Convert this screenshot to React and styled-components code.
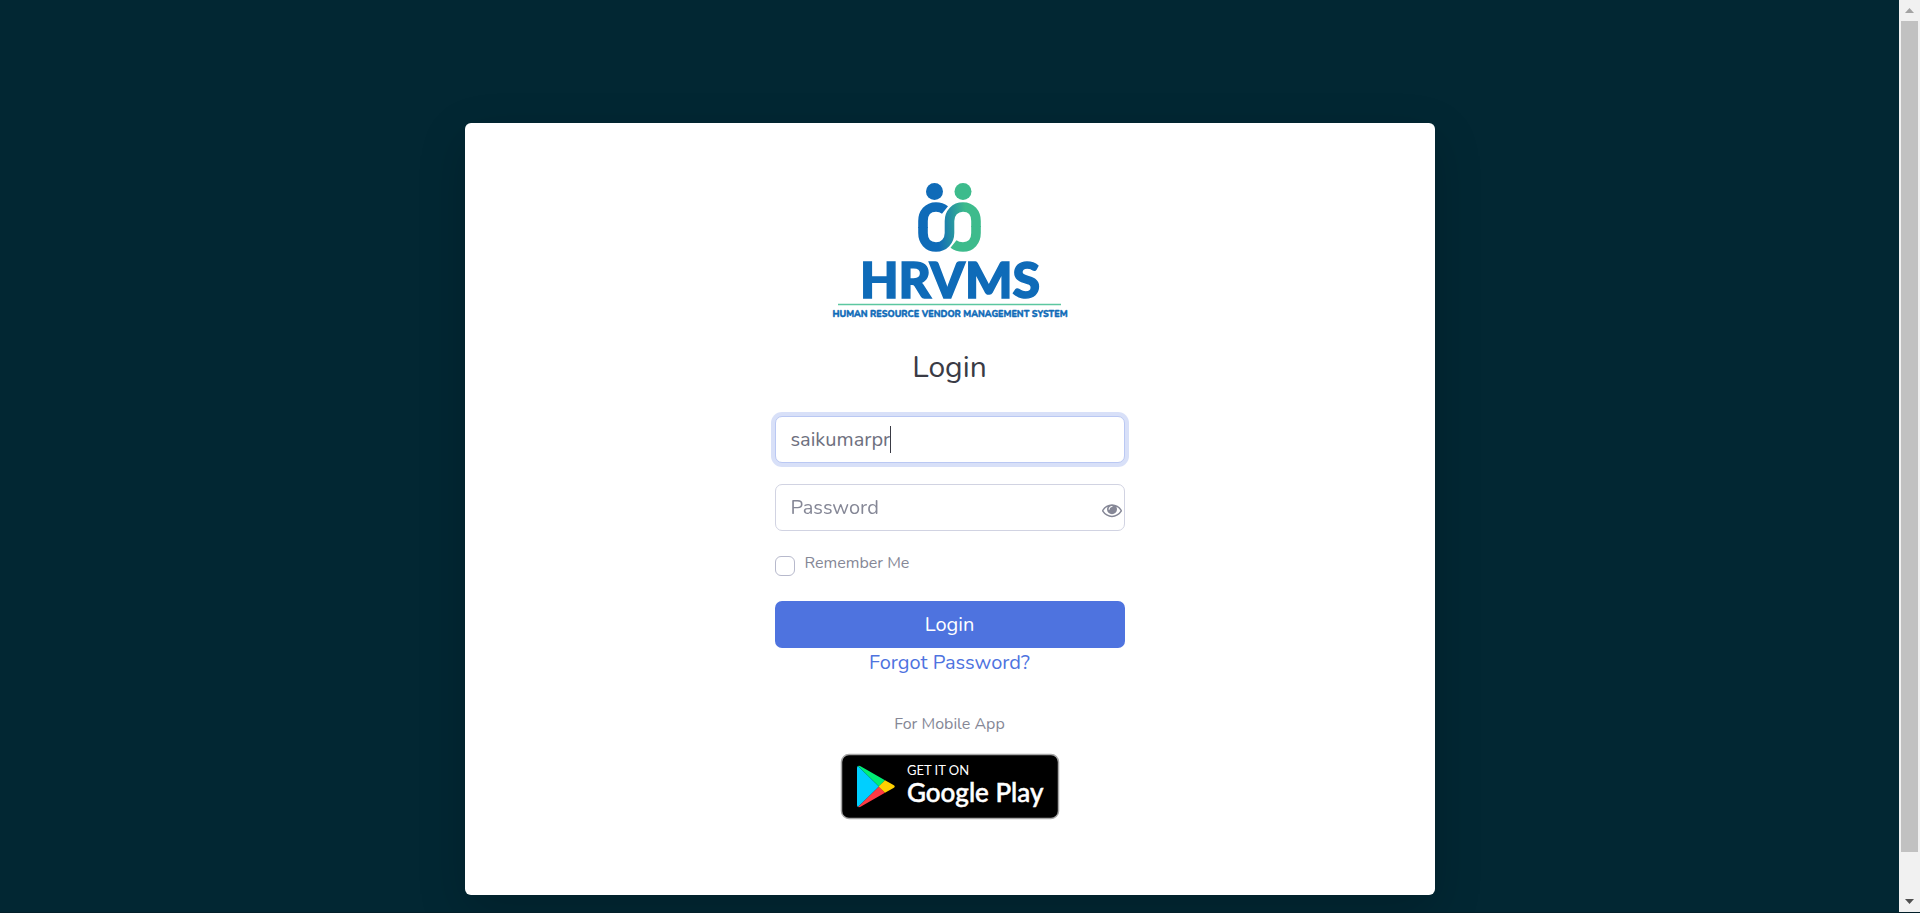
import React, { useState } from "react";
import styled, { createGlobalStyle } from "styled-components";

const GlobalStyle = createGlobalStyle`
  *, *::before, *::after { box-sizing: border-box; }
  body {
    margin: 0;
    background: #022733;
    color: #858796;
    font-family: Nunito, Roboto, sans-serif;
    font-size: 16px;
    line-height: 24px;
  }
`;

const Page = styled.div`
  display: grid;
  grid-template-columns: minmax(0, 1fr) 21px;
  height: 100vh;
  border-bottom: 1px solid #021f29;
  overflow: hidden;
`;

const Main = styled.main`
  display: flex;
  justify-content: center;
  align-items: flex-start;
  padding: 123px 24px 16px;
`;

const Card = styled.section`
  display: flex;
  justify-content: center;
  width: 100%;
  max-width: 970px;
  padding: 47px 24px 65px;
  background: #fff;
  border-radius: 6px;
  box-shadow: 0 16px 48px rgba(0, 0, 0, 0.175);
`;

const Column = styled.div`
  display: flex;
  flex-direction: column;
  align-items: center;
  width: 100%;
  max-width: 350px;
`;

const Title = styled.h1`
  margin: 19px 0 29px;
  color: #3a3b45;
  font-size: 30px;
  font-weight: 400;
  line-height: 38px;
`;

const Form = styled.form`
  display: flex;
  flex-direction: column;
  width: 100%;
`;

const Field = styled.div`
  position: relative;
  margin-bottom: 21px;
`;

const TextInput = styled.input`
  display: block;
  width: 100%;
  height: 47px;
  padding: 7px 15px;
  border: 1px solid #d1d3e2;
  border-radius: 7px;
  background: #fff;
  color: #6e707e;
  caret-color: transparent;
  font: inherit;
  font-size: 20px;
  line-height: 30px;
  outline: 0;

  &::placeholder {
    color: #858796;
    opacity: 1;
  }

  &:focus {
    border-color: #bac8f3;
    box-shadow: 0 0 0 4px rgba(78, 115, 223, 0.22);
  }
`;

const Caret = styled.span`
  position: absolute;
  top: 10px;
  left: 115px;
  width: 1px;
  height: 27px;
  background: #3a3b45;
`;

const EyeButton = styled.button`
  position: absolute;
  top: 16px;
  right: 3px;
  width: 20px;
  height: 20px;
  padding: 0;
  border: 0;
  background: none;
  color: #858796;
  cursor: pointer;

  svg { display: block; }
`;

const Remember = styled.div`
  display: flex;
  gap: 10px;
  margin-bottom: 25px;
`;

const Checkbox = styled.input`
  appearance: none;
  width: 20px;
  height: 20px;
  margin: 4px 0 0;
  border: 1px solid #b7b9cc;
  border-radius: 6px;
  background: #fff;

  &:checked {
    border-color: #4e73df;
    background: #4e73df;
  }
`;

const RememberLabel = styled.label`
  font-size: 16px;
  line-height: 22px;
`;

const SubmitButton = styled.button`
  height: 47px;
  border: 0;
  border-radius: 7px;
  background: #4e73df;
  color: #fff;
  font: inherit;
  font-size: 20px;
  line-height: 30px;
  cursor: pointer;
`;

const ForgotLink = styled.a`
  color: #4e73df;
  font-size: 20px;
  line-height: 30px;
  text-decoration: none;
`;

const Note = styled.p`
  margin: 34px 0 4px;
`;

const StoreLink = styled.a`
  display: block;
`;

const Drawing = styled.svg`
  display: block;
  font-family: Lato, sans-serif;
`;

const ScrollTrack = styled.div`
  display: flex;
  flex-direction: column;
  align-items: center;
  background: #f1f1f1;
`;

const ScrollArrow = styled.div`
  display: grid;
  place-items: center;
  flex: none;
  width: 21px;
  height: 21px;
`;

const ScrollRail = styled.div`
  flex: 1;
`;

const ScrollThumb = styled.div`
  width: 17px;
  height: 95.5%;
  background: #c1c1c1;
`;

function Logo() {
  return (
    <Drawing width="260" height="160" viewBox="0 0 260 160" role="img" aria-label="HRVMS">
      <defs>
        <linearGradient id="ribbon" gradientUnits="userSpaceOnUse" x1="98" y1="60" x2="161" y2="54">
          <stop offset="0.3" stopColor="#0f6bb8" />
          <stop offset="0.78" stopColor="#3dbb8c" />
        </linearGradient>
      </defs>
      <circle cx="114.5" cy="21.5" r="8.5" fill="#0f6bb8" />
      <circle cx="143" cy="21.5" r="8.5" fill="#3dbb8c" />
      <g fill="none" strokeWidth="9.6">
        <path d="M103 58 V51 C103 43 108 37 116 37 C120 37 122.500 38 125 40" stroke="#0f6bb8" />
        <path d="M156 56 V63 C156 71 151 77 143 77 C139 77 136 76 133.500 74" stroke="#3dbb8c" />
        <path d="M128 68 Q129.500 66 129.500 63 V51 Q129.500 46 132 42.500" stroke="#fff" strokeWidth="12" />
        <path d="M103 57 V63 C103 71 108 77 116 77 C124 77 129.500 71 129.500 63 V51 C129.500 43 135 37 143 37 C151 37 156 43 156 51 V57" stroke="url(#ribbon)" />
      </g>
      <text x="130" y="127.500" textAnchor="middle" fontSize="50" fontWeight="900" fill="#0f6bb8" stroke="#0f6bb8" strokeWidth="1.500">HRVMS</text>
      <path d="M18 134.500H241" stroke="#5cc7a0" strokeWidth="1.300" />
      <text x="130" y="147" textAnchor="middle" fontFamily="Nunito, Lato" fontSize="9" fontWeight="800" fill="#0f6bb8" stroke="#0f6bb8" strokeWidth="0.400">HUMAN RESOURCE VENDOR MANAGEMENT SYSTEM</text>
    </Drawing>
  );
}

function GooglePlayBadge() {
  return (
    <Drawing width="260" height="90" viewBox="0 0 260 90" role="img" aria-label="Get it on Google Play">
      <rect x="21.500" y="14.500" width="217" height="64" rx="7.500" fill="#000" stroke="#a6a6a6" strokeWidth="1.500" />
      <path d="M38 26 L59 46.500 L38 67 Q37 66.500 37 65 V28 Q37 26.500 38 26Z" fill="#00cfff" />
      <path d="M38 26 Q39.500 25.500 41 26.500 L65 40.300 L59 46.500Z" fill="#00ee76" />
      <path d="M38 67 Q39.500 67.500 41 66.500 L65 52.700 L59 46.500Z" fill="#ff3a44" />
      <path d="M65 40.300 L73.500 45 Q76 46.500 73.500 48 L65 52.700 L58.700 46.500Z" fill="#ffd000" />
      <g fill="#fff">
        <text x="87" y="35" fontSize="13">GET IT ON</text>
        <text x="87" y="62" fontSize="26" fontWeight="500" stroke="#fff" strokeWidth="0.500">Google Play</text>
      </g>
    </Drawing>
  );
}

function EyeIcon() {
  return (
    <svg width="20" height="20" viewBox="0 0 1792 1792" fill="currentColor" aria-hidden="true">
      <path d="M1664 960q-152-236-381-353 61 104 61 225 0 185-131.500 316.500t-316.500 131.500-316.500-131.500-131.500-316.500q0-121 61-225-229 117-381 353 133 205 333.500 326.500t434.500 121.500 434.500-121.500 333.500-326.500zm-720-384q0-20-14-34t-34-14q-125 0-214.500 89.500t-89.500 214.500q0 20 14 34t34 14 34-14 14-34q0-86 61-147t147-61q20 0 34-14t14-34zm848 384q0 34-20 69-140 230-376.500 368.500t-499.500 138.500-499.500-139-376.500-368q-20-35-20-69t20-69q140-229 376.500-368t499.500-139 499.500 139 376.500 368q20 35 20 69z" />
    </svg>
  );
}

export default function App() {
  const [user, setUser] = useState("saikumarpr");
  const [visible, setVisible] = useState(false);

  return (
    <>
      <GlobalStyle />
      <Page>
        <Main>
          <Card>
            <Column>
              <Logo />
              <Title>Login</Title>
              <Form onSubmit={(e) => e.preventDefault()}>
                <Field>
                  <TextInput
                    aria-label="Username"
                    value={user}
                    onChange={(e) => setUser(e.target.value)}
                    autoComplete="off"
                    spellCheck={false}
                    autoFocus
                  />
                  <Caret />
                </Field>
                <Field>
                  <TextInput type={visible ? "text" : "password"} aria-label="Password" placeholder="Password" />
                  <EyeButton type="button" aria-label="Show password" onClick={() => setVisible(!visible)}>
                    <EyeIcon />
                  </EyeButton>
                </Field>
                <Remember>
                  <Checkbox type="checkbox" id="remember" />
                  <RememberLabel htmlFor="remember">Remember Me</RememberLabel>
                </Remember>
                <SubmitButton type="submit">Login</SubmitButton>
              </Form>
              <ForgotLink href="#forgot">Forgot Password?</ForgotLink>
              <Note>For Mobile App</Note>
              <StoreLink href="#google-play">
                <GooglePlayBadge />
              </StoreLink>
            </Column>
          </Card>
        </Main>
        <ScrollTrack aria-hidden="true">
          <ScrollArrow>
            <svg width="9" height="5" viewBox="0 0 9 5"><path d="M4.500 0L9 5H0Z" fill="#a3a3a3" /></svg>
          </ScrollArrow>
          <ScrollRail>
            <ScrollThumb />
          </ScrollRail>
          <ScrollArrow>
            <svg width="9" height="5" viewBox="0 0 9 5"><path d="M0 0H9L4.500 5Z" fill="#505050" /></svg>
          </ScrollArrow>
        </ScrollTrack>
      </Page>
    </>
  );
}
